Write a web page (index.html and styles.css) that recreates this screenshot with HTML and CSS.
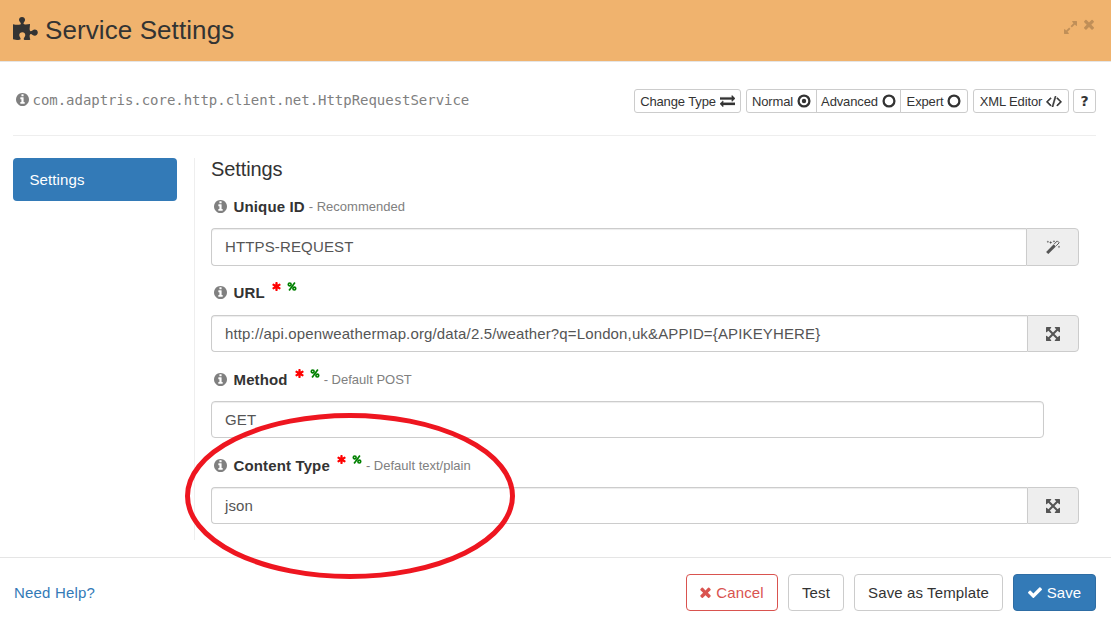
FILE: index.html
```
<!DOCTYPE html>
<html lang="en">
<head>
<meta charset="utf-8">
<title>Service Settings</title>
<link rel="stylesheet" href="styles.css">
</head>
<body>
<svg class="defs" aria-hidden="true">
  <symbol id="times" viewBox="302 302 1188 1252"><path d="M1490 1322q0 40-28 68l-136 136q-28 28-68 28t-68-28l-294-294-294 294q-28 28-68 28t-68-28l-136-136q-28-28-28-68t28-68l294-294-294-294q-28-28-28-68t28-68l136-136q28-28 68-28t68 28l294 294 294-294q28-28 68-28t68 28l136 136q28 28 28 68t-28 68l-294 294 294 294q28 28 28 68z"/></symbol>
  <symbol id="check" viewBox="121 300 1550 1222"><path d="M1671 566q0 40-28 68l-724 724-136 136q-28 28-68 28t-68-28l-136-136-362-362q-28-28-28-68t28-68l136-136q28-28 68-28t68 28l294 295 656-657q28-28 68-28t68 28l136 136q28 28 28 68z"/></symbol>
  <symbol id="info" viewBox="128 128 1536 1536"><path d="M1152 1376v-160q0-14-9-23t-23-9h-96v-512q0-14-9-23t-23-9h-320q-14 0-23 9t-9 23v160q0 14 9 23t23 9h96v320h-96q-14 0-23 9t-9 23v160q0 14 9 23t23 9h448q14 0 23-9t9-23zm-128-896v-160q0-14-9-23t-23-9h-192q-14 0-23 9t-9 23v160q0 14 9 23t23 9h192q14 0 23-9t9-23zm640 416q0 209-103 385.5t-279.5 279.5-385.5 103-385.5-103-279.5-279.5-103-385.5 103-385.5 279.5-279.5 385.5-103 385.5 103 279.5 279.5 103 385.5z"/></symbol>
  <symbol id="code" viewBox="-60 270 1920 1300"><path stroke="currentColor" stroke-width="70" d="M553 1399l-50 50q-10 10-23 10t-23-10l-466-466q-10-10-10-23t10-23l466-466q10-10 23-10t23 10l50 50q10 10 10 23t-10 23l-393 393 393 393q10 10 10 23t-10 23zm591-1067l-373 1291q-4 13-15.5 19.5t-23.5 2.5l-62-17q-13-4-19.5-15.5t-2.5-24.5l373-1291q4-13 15.5-19.5t23.5-2.5l62 17q13 4 19.5 15.5t2.5 24.5zm657 651l-466 466q-10 10-23 10t-23-10l-50-50q-10-10-10-23t10-23l393-393-393-393q-10-10-10-23t10-23l50-50q10-10 23-10t23 10l466 466q10 10 10 23t-10 23z"/></symbol>
  <symbol id="arrows" viewBox="128 128 1536 1536"><path d="M1411 541l-355 355 355 355 144-144q29-31 70-14 39 17 39 59v448q0 26-19 45t-45 19h-448q-42 0-59-40-17-39 14-69l144-144-355-355-355 355 144 144q31 30 14 69-17 40-59 40h-448q-26 0-45-19t-19-45v-448q0-42 40-59 39-17 69 14l144 144 355-355-355-355-144 144q-19 19-45 19-12 0-24-5-40-17-40-59v-448q0-26 19-45t45-19h448q42 0 59 40 17 39-14 69l-144 144 355 355 355-355-144-144q-31-30-14-69 17-40 59-40h448q26 0 45 19t19 45v448q0 42-39 59-13 5-25 5-26 0-45-19z"/></symbol>
  <symbol id="expand" viewBox="128 128 1536 1536"><path d="M883 1056q0 13-10 23l-332 332 144 144q19 19 19 45t-19 45-45 19h-448q-26 0-45-19t-19-45v-448q0-26 19-45t45-19 45 19l144 144 332-332q10-10 23-10t23 10l114 114q10 10 10 23zm781-864v448q0 26-19 45t-45 19-45-19l-144-144-332 332q-10 10-23 10t-23-10l-114-114q-10-10-10-23t10-23l332-332-144-144q-19-19-19-45t19-45 45-19h448q26 0 45 19t19 45z"/></symbol>
  <symbol id="asterisk" viewBox="180 128 1432 1536"><path d="M1546 1050q46 26 59.5 77.5t-12.5 97.5l-64 110q-26 46-77.5 59.5t-97.5-12.5l-266-153v307q0 52-38 90t-90 38h-128q-52 0-90-38t-38-90v-307l-266 153q-46 26-97.5 12.5t-77.5-59.5l-64-110q-26-46-12.5-97.5t59.5-77.5l266-154-266-154q-46-26-59.5-77.5t12.5-97.5l64-110q26-46 77.5-59.5t97.5 12.5l266 153v-307q0-52 38-90t90-38h128q52 0 90 38t38 90v307l266-153q46-26 97.5-12.5t77.5 59.5l64 110q26 46 12.5 97.5t-59.5 77.5l-266 154z"/></symbol>
  <symbol id="exchange" viewBox="0 256 1792 1376"><path stroke="currentColor" stroke-width="40" d="M1792 1184v192q0 13-9.5 22.5t-22.5 9.5h-1376v192q0 13-9.5 22.5t-22.5 9.5q-12 0-24-10l-319-320q-9-9-9-22 0-14 9-23l320-320q9-9 23-9 13 0 22.5 9.5t9.5 22.5v192h1376q13 0 22.5 9.5t9.5 22.5zm0-544q0 14-9 23l-320 320q-9 9-23 9-13 0-22.5-9.5t-9.5-22.5v-192h-1376q-13 0-22.5-9.5t-9.5-22.5v-192q0-13 9.5-22.5t22.5-9.5h1376v-192q0-14 9-23t23-9q12 0 24 10l319 319q9 9 9 23z"/></symbol>
  <symbol id="percent" viewBox="0 0 9 9"><g fill="none" stroke="currentColor" stroke-width="1.7"><circle cx="2.2" cy="2.400" r="1.400"/><circle cx="6.800" cy="6.600" r="1.400"/><path d="M7.400.5 1.600 8.500"/></g></symbol>
  <symbol id="dot" viewBox="0 0 14 14"><circle cx="7" cy="7" r="5.400" fill="none" stroke="currentColor" stroke-width="2.300"/><circle cx="7" cy="7" r="2.200"/></symbol>
  <symbol id="ring" viewBox="0 0 14 14"><circle cx="7" cy="7" r="5.400" fill="none" stroke="currentColor" stroke-width="2.300"/></symbol>
  <symbol id="wand" viewBox="0 0 14 14"><path fill="none" stroke="currentColor" stroke-width="3" d="M1.200 13 8.800 5.400"/><path fill="none" stroke="currentColor" stroke-width="1" d="M8.300 3.900 11.300.9l1.900 1.900-3 3"/><path d="M4.700.9l.5 1.100 1.100.5-1.100.5-.5 1.100-.5-1.100-1.100-.5 1.100-.5zM8 0l.4.9.9.4-.9.4L8 2.600l-.4-.9-.9-.4.9-.4zM1.900.5l.4.9.9.4-.9.4-.4.9-.4-.9-.9-.4.9-.4zM13 5.600l.4.9.9.4-.9.400-.4.900-.4-.9-.9-.4.900-.4z"/></symbol>
  <symbol id="puzzle" viewBox="0 0 25 23"><path d="M0 7.200C2.500 7.700 5 8 7.200 7.500 8.700 7 7.300 5.600 6.600 4.600 5.200 2.500 6.500 0 9 0s3.900 2.400 2.500 4.500c-.8 1.200-1.700 2.200-.2 2.800 1.800.5 4-.2 5.700-.4.1 2-.7 4.600-.2 6.400.4 1.500 1.600.8 2.600.1 2.300-1.700 5.400-.6 5.400 2.200 0 2.900-3 4.100-5.200 2.400-1-.8-2.300-1.500-2.800 0-.5 1.400.2 3.300.5 4.700-1.800.2-4.300.7-5.800.2-1.400-.5-.7-1.800.1-2.900 1.500-2.100.4-4.800-2.200-4.800-2.700 0-4 2.600-2.500 4.700.7 1 1.300 2.400-.2 2.900C5 23.200 1.700 22.500 0 22.200z"/></symbol>
</svg>

<div class="dialog">
  <header class="header">
    <svg class="puzzle"><use href="#puzzle"/></svg>
    <h1>Service Settings</h1>
    <div class="window-tools">
      <svg class="expand"><use href="#expand"/></svg>
      <svg class="close"><use href="#times"/></svg>
    </div>
  </header>

  <main class="body">
    <div class="toolbar">
      <svg class="info"><use href="#info"/></svg>
      <code>com.adaptris.core.http.client.net.HttpRequestService</code>
      <div class="tools">
        <button class="tool change">Change Type <svg class="i-exchange"><use href="#exchange"/></svg></button>
        <div class="group">
          <button class="tool normal">Normal <svg class="i-circle"><use href="#dot"/></svg></button>
          <button class="tool advanced">Advanced <svg class="i-circle"><use href="#ring"/></svg></button>
          <button class="tool expert">Expert <svg class="i-circle"><use href="#ring"/></svg></button>
        </div>
        <button class="tool xml">XML Editor <svg class="i-code"><use href="#code"/></svg></button>
        <button class="tool help">?</button>
      </div>
    </div>

    <div class="columns">
      <nav><a class="tab">Settings</a></nav>
      <section class="form">
        <h2>Settings</h2>
        <div class="field first">
          <div class="label"><svg class="info"><use href="#info"/></svg><b>Unique ID</b><small>- Recommended</small></div>
          <div class="control"><div class="input">HTTPS-REQUEST</div><div class="addon"><svg><use href="#wand"/></svg></div></div>
        </div>
        <div class="field url">
          <div class="label"><svg class="info"><use href="#info"/></svg><b>URL</b><svg class="req"><use href="#asterisk"/></svg><svg class="pct"><use href="#percent"/></svg></div>
          <div class="control"><div class="input">http://api.openweathermap.org/data/2.5/weather?q=London,uk&amp;APPID={APIKEYHERE}</div><div class="addon"><svg><use href="#arrows"/></svg></div></div>
        </div>
        <div class="field">
          <div class="label"><svg class="info"><use href="#info"/></svg><b>Method</b><svg class="req"><use href="#asterisk"/></svg><svg class="pct"><use href="#percent"/></svg><small>- Default POST</small></div>
          <div class="control short"><div class="input">GET</div></div>
        </div>
        <div class="field">
          <div class="label"><svg class="info"><use href="#info"/></svg><b>Content Type</b><svg class="req"><use href="#asterisk"/></svg><svg class="pct"><use href="#percent"/></svg><small>- Default text/plain</small></div>
          <div class="control"><div class="input">json</div><div class="addon"><svg><use href="#arrows"/></svg></div></div>
        </div>
      </section>
    </div>
  </main>

  <footer class="footer">
    <a class="need-help">Need Help?</a>
    <button class="btn cancel"><svg class="i-times"><use href="#times"/></svg>Cancel</button>
    <button class="btn test">Test</button>
    <button class="btn template">Save as Template</button>
    <button class="btn save"><svg class="i-check"><use href="#check"/></svg>Save</button>
  </footer>

  <svg class="highlight" viewBox="0 0 330 166"><ellipse cx="165" cy="83" rx="162.500" ry="80.500"/></svg>
</div>
</body>
</html>
```
FILE: styles.css
```
* { box-sizing: border-box; }
body { margin: 0; background: #fff; color: #333; font: 15px/20px "Liberation Sans", Arial, sans-serif; }
svg { fill: currentColor; flex: none; display: block; }
.defs { position: absolute; width: 0; height: 0; }
h1, h2 { margin: 0; font-weight: 400; }
button { font-family: inherit; color: #333; background: #fff; margin: 0; white-space: nowrap; }

.dialog { position: relative; width: 1111px; height: 627px; overflow: hidden; display: flex; flex-direction: column; }

.header { height: 62px; flex: none; padding: 0 17px 0 13px; display: flex; align-items: center; background: #f0b36e; border-bottom: 1px solid #e5e5e5; }
.puzzle { width: 25px; height: 23px; margin: -5px 7px 0 0; }
h1 { font-size: 26px; line-height: 30px; margin-top: -1px; letter-spacing: .09px; }
.window-tools { margin-left: auto; align-self: flex-start; display: flex; gap: 7px; padding-top: 19px; color: #c08f58; }
.expand { width: 13px; height: 13px; margin-top: 2px; }
.close { width: 10px; height: 11px; }

.body { flex: 1; padding: 0 15px 0 13px; }
.toolbar { height: 74px; padding-top: 27px; display: flex; align-items: flex-start; border-bottom: 1px solid #eee; }
.info { width: 13px; height: 13px; color: #808080; }
.toolbar .info { margin: 4px 4px 0 2.500px; }
code { font: 14px/24px "DejaVu Sans Mono", monospace; letter-spacing: -.03px; margin-top: -1px; color: #808080; }
.tools { margin-left: auto; display: flex; gap: 5px; }
.group { display: flex; }
.tool { height: 24px; padding: 1px 0 0; border: 1px solid #ccc; border-radius: 3px; font-size: 13px; letter-spacing: -.13px; line-height: 21px; display: flex; align-items: center; justify-content: center; gap: 4px; }
.tool svg { margin-top: -1px; }
.change { width: 107px; }
.normal { width: 71px; border-radius: 3px 0 0 3px; }
.advanced { width: 85px; margin-left: -1px; border-radius: 0; }
.expert { width: 68px; margin-left: -1px; border-radius: 0 3px 3px 0; }
.xml { width: 96px; }
.help { width: 23px; margin-left: -1px; padding: 0; font: bold 14px/22px "DejaVu Sans", sans-serif; }
.i-exchange { width: 15px; height: 12px; }
.i-circle { width: 14px; height: 14px; }
.i-code { width: 16px; height: 11px; }

.columns { display: flex; padding-top: 22px; }
nav { width: 182px; height: 382px; border-right: 1px solid #eee; }
.tab { display: block; width: 164px; height: 43px; padding: 12px 16.500px; border-radius: 4px; background: #337ab7; color: #fff; letter-spacing: .1px; }
.form { width: 868px; margin-left: 16px; }
h2 { font-size: 20px; line-height: 22px; letter-spacing: -.1px; }
.label { height: 21px; display: flex; align-items: center; padding-left: 2.500px; }
.label b { margin-left: 7px; letter-spacing: .14px; }
.label small { font-size: 13px; margin-left: 4px; color: #808080; padding-top: 1px; }
.field { margin-top: 16px; height: 70px; }
.field.url { height: 71px; }
.control { height: 37px; margin-top: 11px; display: flex; }
.first .control { height: 38px; }
.url .control { margin-top: 12px; }
.input { flex: 1; border: 1px solid #ccc; border-right: 0; border-radius: 4px 0 0 4px; padding: 0 13px; line-height: 36px; letter-spacing: .14px; color: #555; box-shadow: inset 0 1px 1px rgba(0, 0, 0, .075); }
.addon { width: 52px; border: 1px solid #ccc; border-radius: 0 4px 4px 0; background: #eee; color: #555; display: flex; align-items: center; justify-content: center; }
.first .addon { width: 53px; }
.addon svg { width: 14px; height: 14px; }
.short { width: 833px; }
.short .input { border-right: 1px solid #ccc; border-radius: 4px; }
.req { width: 9px; height: 9px; margin: -12px 6px 0 7px; color: red; }
.pct { width: 10px; height: 9px; margin-top: -12px; color: green; }

.footer { height: 70px; flex: none; border-top: 1px solid #e5e5e5; padding: 16px 15px 0 14px; display: flex; align-items: flex-start; }
.need-help { color: #337ab7; line-height: 37px; margin-right: auto; letter-spacing: .17px; }
.btn { height: 37px; padding: 0; border: 1px solid #ccc; border-radius: 4px; font-size: 15px; letter-spacing: .12px; display: flex; align-items: center; justify-content: center; gap: 5px; }
.cancel { width: 92px; color: #d9534f; border-color: #d9534f; }
.test { width: 56px; margin-left: 10px; }
.template { width: 149px; margin-left: 10px; }
.save { width: 83px; margin-left: 10px; color: #fff; background: #337ab7; border-color: #2e6da4; }
.i-times { width: 11px; height: 11px; }
.i-check { width: 14px; height: 11px; }

/* Hand-drawn callout over the form */
.highlight { position: absolute; left: 185px; top: 413px; width: 330px; height: 166px; fill: none; stroke: #ee1620; stroke-width: 5; pointer-events: none; }
```
